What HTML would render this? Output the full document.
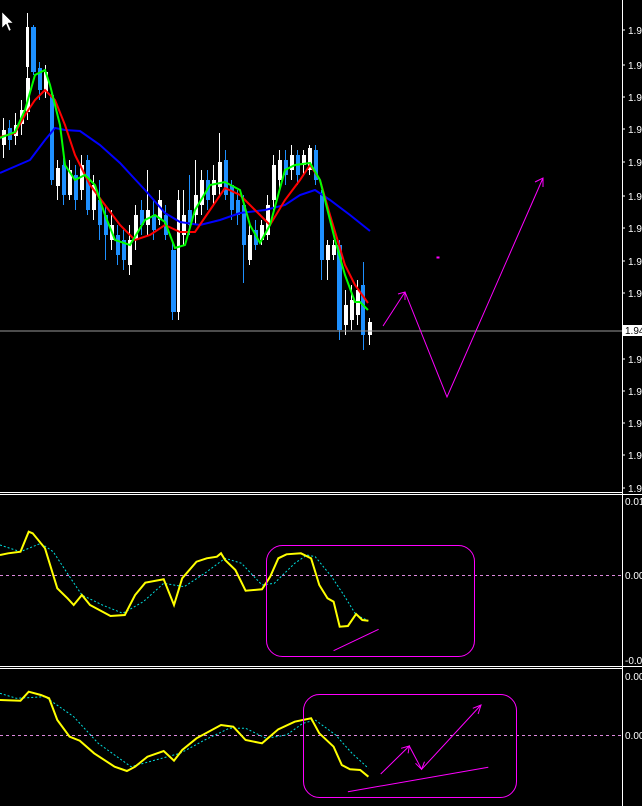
<!DOCTYPE html>
<html><head><meta charset="utf-8"><style>
html,body{margin:0;padding:0;background:#000;width:642px;height:806px;overflow:hidden}
svg{display:block}
text{font-family:"Liberation Sans",sans-serif;font-size:10px;fill:#fff}
.w{fill:#fff}.b{fill:#1e90ff}
</style></head><body>
<svg width="642" height="806" viewBox="0 0 642 806" xmlns="http://www.w3.org/2000/svg">
<rect width="642" height="806" fill="#000"/>
<!-- wicks -->
<path stroke="#fff" stroke-width="1" fill="none" d="M3.5 118V158M15.5 113V145M21.5 100V135M27.5 13V120M45.5 65V98M57.5 160V200M69.5 160V200M81.5 155V200M93.5 175V220M111.5 210V250M129.5 225V275M135.5 205V250M147.5 170V235M159.5 190V225M178.5 190V320M183.5 190V245M195.5 160V225M201.5 170V215M213.5 165V205M219.5 133V195M249.5 225V265M261.5 220V245M267.5 195V240M273.5 155V210M279.5 150V190M291.5 145V180M303.5 150V175M309.5 145V175M327.5 240V280M333.5 240V260M345.5 290V335M351.5 285V330M357.5 280V325M369.5 318V345"/>
<path stroke="#1e90ff" stroke-width="1" fill="none" d="M9.5 120V150M33.5 25V75M39.5 62V100M51.5 90V185M63.5 158V205M75.5 165V210M87.5 155V215M99.5 180V240M105.5 205V260M117.5 225V265M123.5 230V270M141.5 200V235M153.5 200V240M165.5 205V240M172.5 240V320M189.5 175V235M207.5 170V210M225.5 150V200M231.5 180V220M237.5 190V225M243.5 195V283M255.5 220V250M285.5 150V185M297.5 150V185M315.5 145V185M321.5 190V280M339.5 240V340M363.5 262V350"/>
<!-- bodies -->
<g class="w">
<rect x="2" y="130" width="4" height="15"/><rect x="14" y="125" width="4" height="11"/><rect x="20" y="110" width="4" height="14"/><rect x="26" y="27" width="3" height="40"/><rect x="26" y="78" width="4" height="34"/><rect x="44" y="72" width="4" height="20"/><rect x="56" y="168" width="4" height="18"/><rect x="68" y="170" width="4" height="25"/><rect x="80" y="165" width="4" height="25"/><rect x="92" y="185" width="4" height="25"/><rect x="110" y="225" width="4" height="15"/><rect x="128" y="240" width="4" height="25"/><rect x="134" y="215" width="4" height="25"/><rect x="146" y="210" width="4" height="15"/><rect x="158" y="200" width="4" height="20"/><rect x="177" y="200" width="3" height="112"/><rect x="182" y="215" width="4" height="20"/><rect x="194" y="195" width="4" height="20"/><rect x="200" y="180" width="4" height="25"/><rect x="212" y="180" width="4" height="15"/><rect x="218" y="162" width="4" height="25"/><rect x="248" y="235" width="4" height="25"/><rect x="260" y="225" width="4" height="15"/><rect x="266" y="205" width="4" height="30"/><rect x="272" y="165" width="4" height="35"/><rect x="278" y="160" width="4" height="20"/><rect x="290" y="155" width="4" height="15"/><rect x="302" y="155" width="4" height="10"/><rect x="308" y="148" width="4" height="22"/><rect x="326" y="245" width="4" height="15"/><rect x="332" y="245" width="4" height="10"/><rect x="344" y="305" width="4" height="20"/><rect x="350" y="300" width="4" height="20"/><rect x="356" y="290" width="4" height="25"/><rect x="368" y="322" width="4" height="13"/>
</g>
<g class="b">
<rect x="8" y="128" width="4" height="12"/><rect x="31" y="27" width="5" height="45"/><rect x="38" y="68" width="4" height="22"/><rect x="50" y="95" width="4" height="85"/><rect x="62" y="165" width="4" height="30"/><rect x="74" y="175" width="4" height="25"/><rect x="86" y="160" width="4" height="50"/><rect x="98" y="200" width="4" height="25"/><rect x="104" y="215" width="4" height="20"/><rect x="116" y="235" width="4" height="20"/><rect x="122" y="240" width="4" height="20"/><rect x="140" y="210" width="4" height="15"/><rect x="152" y="215" width="4" height="15"/><rect x="164" y="215" width="4" height="20"/><rect x="171" y="250" width="5" height="62"/><rect x="188" y="210" width="4" height="15"/><rect x="206" y="180" width="4" height="20"/><rect x="224" y="160" width="4" height="35"/><rect x="230" y="185" width="4" height="25"/><rect x="236" y="200" width="4" height="15"/><rect x="242" y="205" width="4" height="40"/><rect x="254" y="230" width="4" height="15"/><rect x="284" y="160" width="4" height="15"/><rect x="296" y="155" width="4" height="20"/><rect x="314" y="150" width="4" height="30"/><rect x="320" y="195" width="4" height="65"/><rect x="337" y="245" width="5" height="85"/><rect x="361" y="285" width="4" height="50"/>
</g>
<polyline fill="none" stroke="#0000ff" stroke-width="2" points="0,173 30,160 45,140 55,128 65,130 80,131 100,145 120,163 145,190 165,213 180,222 200,225 220,220 240,213 265,210 285,205 300,195 315,190 330,200 350,215 370,231"/>
<polyline fill="none" stroke="#ff0000" stroke-width="2" points="0,137 15,133 25,115 35,100 45,90 55,100 65,125 75,155 90,185 105,205 120,225 135,240 150,235 165,225 180,232 195,232 210,210 225,188 240,195 255,210 270,225 285,200 300,180 310,165 320,180 330,215 345,265 355,285 368,303"/>
<polyline fill="none" stroke="#00ff00" stroke-width="2" points="0,138 15,132 25,110 35,75 45,70 50,85 60,125 65,165 75,180 85,175 95,185 105,215 115,240 130,245 145,220 155,215 165,222 175,248 185,245 195,210 210,185 225,182 240,190 250,225 260,243 270,225 285,170 295,165 310,163 320,180 335,240 345,275 355,302 360,302 368,310"/>
<line x1="0" y1="331" x2="622" y2="331" stroke="#999" stroke-width="1"/>
<g stroke="#ff00ff" fill="none" stroke-width="1">
<polyline points="383,326 405,292"/><polyline points="398,294 405,292 405,300"/>
<polyline points="405,292 447,397 543,178"/><polyline points="535,182 543,178 543,187"/>
<rect x="437" y="257" width="2" height="1" fill="#ff00ff"/>
</g>
<line x1="622.5" y1="0" x2="622.5" y2="806" stroke="#fff"/>
<g stroke="#fff"><path d="M622 30H625M622 65H625M622 97H625M622 129H625M622 162H625M622 196H625M622 228H625M622 261H625M622 293H625M622 359H625M622 391H625M622 423H625M622 455H625M622 488H625"/></g>
<text x="628" y="34">1.95</text><text x="628" y="69">1.95</text><text x="628" y="101">1.91</text><text x="628" y="133">1.91</text><text x="628" y="166">1.91</text><text x="628" y="200">1.90</text><text x="628" y="232">1.90</text><text x="628" y="265">1.95</text><text x="628" y="297">1.95</text><text x="628" y="363">1.94</text><text x="628" y="395">1.91</text><text x="628" y="427">1.91</text><text x="628" y="459">1.92</text><text x="628" y="492">1.92</text>
<rect x="623" y="325" width="19" height="11" fill="#fff"/>
<text x="625" y="334" style="fill:#000">1.94</text>
<line x1="0" y1="492.5" x2="622" y2="492.5" stroke="#fff"/>
<line x1="0" y1="494.5" x2="642" y2="494.5" stroke="#fff"/>
<line x1="0" y1="666.5" x2="642" y2="666.5" stroke="#fff"/>
<line x1="0" y1="668.5" x2="622" y2="668.5" stroke="#fff"/>
<line x1="0" y1="575.5" x2="622" y2="575.5" stroke="#dd88dd" stroke-dasharray="3,3"/>
<line x1="0" y1="735.5" x2="622" y2="735.5" stroke="#dd88dd" stroke-dasharray="3,3"/>
<text x="625" y="505">0.01</text>
<text x="625" y="579">0.00</text>
<text x="625" y="664">-0.0</text>
<text x="625" y="680">0.00</text>
<text x="625" y="739">0.00</text>
<!-- subpanel 1 -->
<polyline fill="none" stroke="#00dddd" stroke-dasharray="2,2" points="0,545 20.5,551.7 40.9,543.3 53.2,551.7 69.6,576.7 81.9,595 102.3,605 122.8,613.3 143.3,601.7 163.7,583.3 184.2,586.7 204.7,573.3 225.1,558.3 241.5,563.3 262,585 274.3,583.3 294.7,563.3 307,555 315.2,556.7 331.6,576.7 343.8,595 356.1,615 368.4,620.7"/>
<polyline fill="none" stroke="#ffff00" stroke-width="2" points="0,555 8.2,553.3 20.5,551.7 28.7,531.7 32.7,533.3 45,548.3 57.3,588.3 67.5,598.3 73.7,605 81.9,595 90,605 110.5,616 124.8,615 135.1,595 145.3,582.7 163.7,579.3 174,605 182.2,578.3 196.5,561.7 206.7,558.3 216.9,556.7 221,553.3 225.1,560 235.4,570 245.6,590.7 262,589.3 270.2,576.7 278.3,558.3 286.5,554.3 300.9,553.3 311.1,558.3 319.3,585 327.5,598.3 333.6,601.7 339.7,626.7 347.9,626 356.1,614 362.3,620 368.4,620.7"/>
<line x1="333.6" y1="650.7" x2="378.6" y2="629.3" stroke="#ff00ff"/>
<rect x="266.5" y="545.5" width="208" height="111" rx="16" fill="none" stroke="#ff00ff"/>
<!-- subpanel 2 -->
<polyline fill="none" stroke="#00dddd" stroke-dasharray="2,2" points="0,693.3 16.4,698.3 45,696.7 73.7,716.7 98.2,743.3 131,766.7 155.5,760 180.1,753.3 204.7,740 229.2,728.3 245.6,728.3 266.1,738.3 286.5,735 302.9,723.3 315.2,720 335.7,735 352,753.3 368.4,768.3"/>
<polyline fill="none" stroke="#ffff00" stroke-width="2" points="0,700 20.5,700.7 28.7,691.7 40.9,695 49.1,698.3 57.3,720 69.6,736.7 79.8,740.7 94.1,753.3 114.6,766.7 126.9,771 135.1,766.7 147.4,756.7 163.7,751 174,760.7 182.2,750 196.5,738.3 221,725 233.3,726.7 245.6,740 262,743.3 278.3,729.3 294.7,721.7 311.1,718.3 319.3,733.3 333.6,746.7 341.8,765 350,769.3 360.2,770 368.4,776.7"/>
<g stroke="#ff00ff" fill="none">
<line x1="347.9" y1="791.7" x2="488.3" y2="767.3"/>
<polyline points="380.7,774 409.3,746 421.6,769.3 481,705"/>
<polyline points="401.1,748.3 409.3,746 408.1,753.3"/>
<polyline points="415.5,763.3 421.6,769.3 424.5,761.7"/>
<polyline points="472.8,708.3 481,705 478.1,714"/>
<rect x="303.5" y="694.5" width="213" height="103" rx="16"/>
</g>
<polygon points="2,12 2,28 6,24 9,31 11,30 8,23 13,23" fill="#fff" stroke="#000" stroke-width="0.5"/>
</svg>
</body></html>
